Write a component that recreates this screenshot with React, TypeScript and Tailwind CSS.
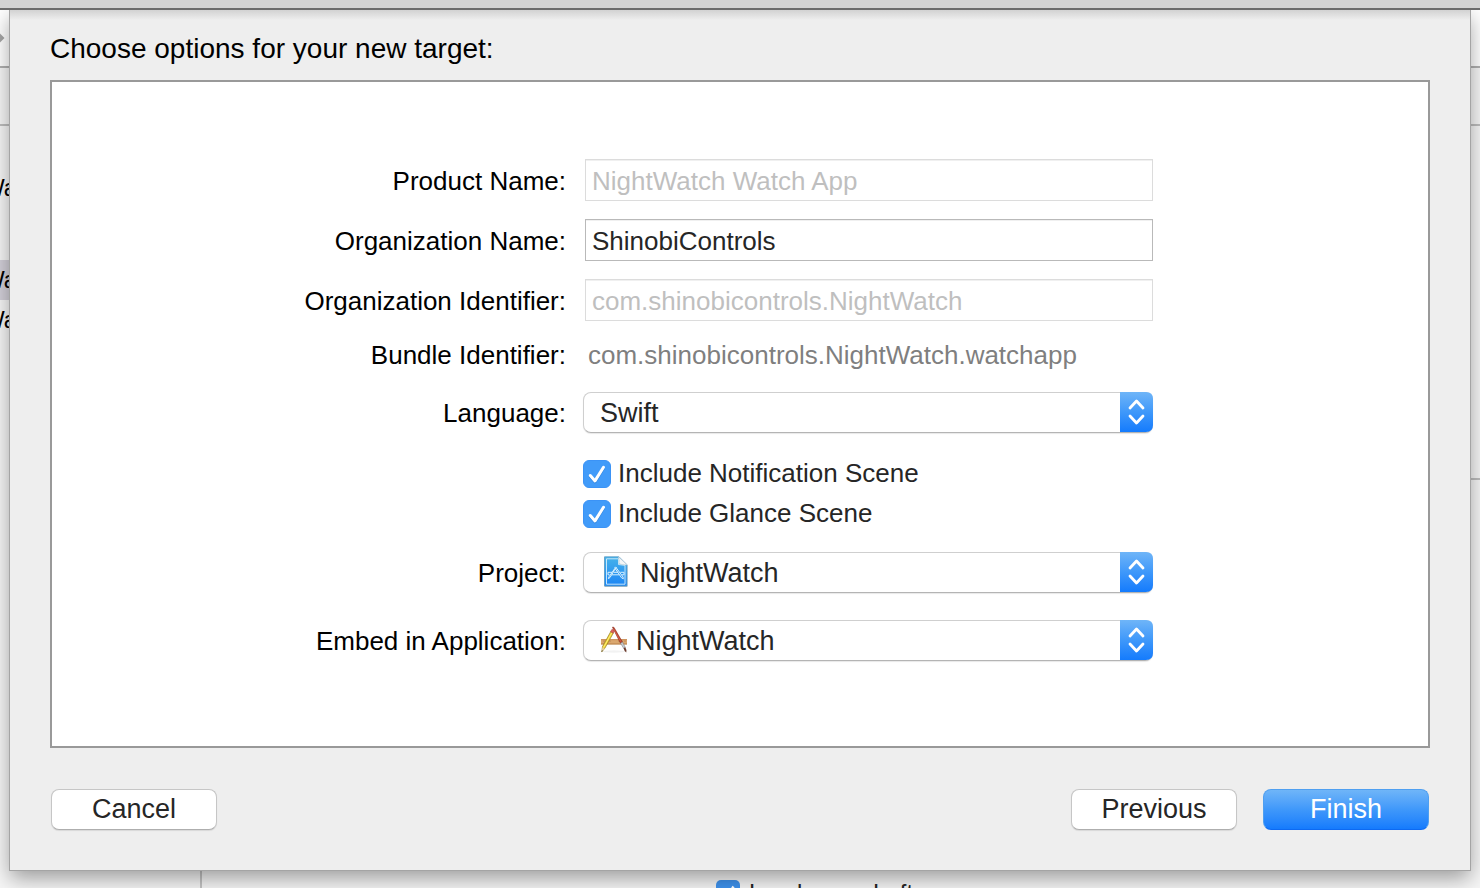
import type { ReactNode } from "react";

function Row({ label, htmlFor, children }: { label?: string; htmlFor?: string; children: ReactNode }) {
  return (
    <div className="grid grid-cols-[514fr_570fr_258fr] items-baseline gap-x-[17px]">
      {label ? (
        <label htmlFor={htmlFor} className="text-right text-[26px] leading-8 whitespace-nowrap text-black">
          {label}
        </label>
      ) : (
        <span />
      )}
      <div className="min-w-0">{children}</div>
    </div>
  );
}

function TextField({ id, value, disabled }: { id: string; value: string; disabled?: boolean }) {
  return (
    <div className="pl-0.5">
      <input
        id={id}
        type="text"
        defaultValue={value}
        disabled={disabled}
        className="block h-[42px] w-full border border-[#b9b9b9] bg-white px-1.5 pt-0.5 text-[26px] text-[#262626] shadow-[inset_0_1px_0_#f0f0f0] outline-none disabled:border-[#dcdcdc] disabled:text-[#bfbfbf]"
      />
    </div>
  );
}

function PopUp({ id, value, icon, pad }: { id: string; value: string; icon?: ReactNode; pad: string }) {
  return (
    <div className="relative">
      <select
        id={id}
        defaultValue={value}
        className={`block h-[41px] w-full appearance-none rounded-lg border border-[#cfcfcf] border-b-[#b4b4b4] bg-white text-[27px] text-[#262626] shadow-[0_1px_1px_#00000018] outline-none ${pad}`}
      >
        <option>{value}</option>
      </select>
      {icon}
      <svg
        className="pointer-events-none absolute top-0 right-0 h-[41px] w-[33px]"
        viewBox="0 0 33 41"
        aria-hidden="true"
      >
        <defs>
          <linearGradient id={`${id}-fill`} x1="0" y1="0" x2="0" y2="1">
            <stop offset="0" stopColor="#6fb5f8" />
            <stop offset="0.5" stopColor="#3f98fa" />
            <stop offset="1" stopColor="#147bfd" />
          </linearGradient>
        </defs>
        <path d="M0 0H26Q33 0 33 7V33Q33 40 26 40H0Z" fill={`url(#${id}-fill)`} />
        <path
          d="M10 16L16.500 9L23 16M10 24L16.500 31L23 24"
          fill="none"
          stroke="#fff"
          strokeWidth="2.800"
          strokeLinecap="round"
          strokeLinejoin="round"
        />
      </svg>
    </div>
  );
}

function CheckBox({ id, label }: { id: string; label: string }) {
  return (
    <div className="flex h-7 items-center">
      <span className="relative size-7 shrink-0">
        <input
          id={id}
          type="checkbox"
          defaultChecked
          className="peer block size-7 appearance-none rounded-md border border-[#b9b9b9] bg-white checked:border-[#3b93f6] checked:bg-[#419bf9]"
        />
        <svg
          viewBox="0 0 28 28"
          className="pointer-events-none absolute inset-0 hidden size-7 peer-checked:block"
          fill="none"
          strokeLinecap="round"
          strokeLinejoin="round"
          aria-hidden="true"
        >
          <path d="M7.300 16.500L12 21.900L20.500 8.300" stroke="#2a7fd8" strokeWidth="2.800" />
          <path d="M7.300 15.500L12 20.900L20.500 7.300" stroke="#fff" strokeWidth="3" />
        </svg>
      </span>
      <label htmlFor={id} className="pb-0.5 pl-[7px] text-[26px] leading-7 whitespace-nowrap text-[#262626]">
        {label}
      </label>
    </div>
  );
}

function ProjectIcon() {
  return (
    <svg
      viewBox="0 0 26 32"
      className="pointer-events-none absolute top-1 left-5 h-8 w-[26px]"
      fill="none"
      aria-hidden="true"
    >
      <defs>
        <linearGradient id="doc" x1="0" y1="0" x2="0" y2="1">
          <stop offset="0" stopColor="#46b2ea" />
          <stop offset="1" stopColor="#1c85f5" />
        </linearGradient>
      </defs>
      <path d="M1.500 1.500H16.500L24.500 9.500V31H1.500Z" fill="#7d8b96" opacity="0.5" />
      <path d="M1.500 0.800H16L24 8.800V30H1.500Z" fill="url(#doc)" stroke="#5d9cc4" strokeWidth="0.800" />
      <path d="M3.500 2.800H15.500V8.500L22 9.300V28.200H3.500Z" stroke="#d5effc" strokeWidth="0.900" />
      <path
        d="M15.500 0.800L24 8.800Q18.500 9.200 16 7.500Q16.500 4 15.500 0.800Z"
        fill="#f4f6f7"
        stroke="#c3cdd3"
        strokeWidth="0.600"
      />
      <path
        d="M13.300 11L7 21.500M11.500 11.500L18.500 21.800M12.500 10.800L20 21M11.800 12.500L6 20.800L5.400 22.600L7 21.500M5 16.300H9M10.800 16.300H15M17.300 16.300H21V18.800H18.500M16.300 18.800H8.800M6.500 18.800H5V16.300M18.500 21.800L20.300 22.800L20 21"
        stroke="#d8f1ff"
        strokeWidth="1"
      />
    </svg>
  );
}

function ApplicationIcon() {
  return (
    <svg
      viewBox="0 0 28 30"
      className="pointer-events-none absolute top-1.5 left-[17px] h-[30px] w-7"
      fill="none"
      aria-hidden="true"
    >
      <ellipse cx="14" cy="25.500" rx="12" ry="1.200" fill="#000" opacity="0.050" />
      <path d="M1 13.200H27V18.300H1Z" fill="#dba870" />
      <path d="M1 13.200H27V14.200H1Z" fill="#c98d55" />
      <path d="M1 17.500H27V18.500H1Z" fill="#b98048" />
      <path
        d="M4 14.300V16M7 14.300V15.500M10 14.300V16M19 14.300V16M22 14.300V15.500M25 14.300V16"
        stroke="#9a6a3a"
        strokeWidth="0.500"
      />
      <path d="M13.500 6.800L5 22L1.700 26L2.500 20.500L10.900 5.300Z" fill="#f0d02e" stroke="#857024" strokeWidth="0.600" />
      <path d="M11.900 6.500L3.600 21.500" stroke="#fff08a" strokeWidth="0.900" />
      <path d="M10.600 5.800L11.800 3.500Q13.300 3.200 14.200 4.800L13.200 7.200Z" fill="#e0605a" stroke="#a3423e" strokeWidth="0.500" />
      <path d="M2.400 21.200L4.700 22.400L1.700 26Z" fill="#e7cfa0" />
      <path d="M2 24.200L2.700 24.600L1.600 26.200Z" fill="#222" />
      <path d="M12.400 1.200Q13.500 0.300 14.400 2.100L22.500 16.100L20.500 17.300Z" fill="#c2412c" stroke="#7a2a1c" strokeWidth="0.500" />
      <path d="M13.500 3L20.800 15.500" stroke="#e4715d" strokeWidth="0.600" />
      <path d="M20.500 17.200L22.500 16L25.300 21.400L23.700 22.400Z" fill="#c9ccd0" stroke="#77797d" strokeWidth="0.500" />
      <path d="M23.600 22.300L25.300 21.300Q26.800 23.500 26.300 26.500Q24.100 25 23.600 22.300Z" fill="#6a3a2c" />
    </svg>
  );
}

function Backdrop() {
  return (
    <div className="absolute inset-0 flex flex-col overflow-hidden bg-[#f6f6f6] pt-2.5" aria-hidden="true">
      <div className="flex h-[58px] shrink-0 items-center border-b-2 border-[#b0b0b0] bg-white">
        <svg viewBox="0 0 6 10" className="h-2.5 w-1.5">
          <path d="M0 0.500L4.500 5L0 9.500Z" fill="#a5a5a5" />
        </svg>
      </div>
      <div className="h-[58px] shrink-0 border-b-2 border-[#bdbdbd]" />
      <div className="flex flex-1">
        <div className="w-[202px] border-r-2 border-[#c4c4c4] pt-[42px] text-[23px] leading-10 text-black">
          <div className="-ml-[17px] h-10">Wa</div>
          <div className="mt-[52px] h-10 bg-[#d3d0d9]">
            <div className="-ml-[17px]">Wa</div>
          </div>
          <div className="-ml-[17px] h-10">Wa</div>
        </div>
        <div className="flex-1">
          <div className="h-[354px] border-b-2 border-[#bdbdbd]" />
          <div className="flex gap-[9px] pt-[400px] pl-[514px]">
            <svg viewBox="0 0 24 24" className="size-6">
              <rect width="24" height="24" rx="5" fill="#3f93ee" />
              <path d="M6.500 13L10.500 18L17.500 6.500" stroke="#fff" strokeWidth="2.500" fill="none" />
            </svg>
            <span className="text-[24px] leading-[26px] text-[#262626]">Landscape Left</span>
          </div>
        </div>
      </div>
    </div>
  );
}

const pushButton =
  "h-[41px] w-[166px] rounded-lg border border-[#c6c6c6] border-b-[#aeaeae] bg-white pb-0.5 text-[27px] leading-8 text-[#262626] shadow-[0_1px_1px_#00000018]";

export default function App() {
  return (
    <div className="relative h-screen overflow-hidden font-['Liberation_Sans',Arial,sans-serif]">
      <Backdrop />
      <div className="relative z-10 h-2.5 border-b-2 border-[#6b6b6b] bg-[#d3d3d3]" />
      <main className="relative mx-2.5 bg-[#eeeeee] px-10 pt-[22px] pb-10 shadow-[0_0_0_1px_#a4a4a4,0_8px_20px_#00000060]">
        <div className="absolute inset-x-0 top-0 h-2.5 bg-gradient-to-b from-[#d2d2d2] to-[#eeeeee]" />
        <h1 className="relative mb-[14px] text-[28px] leading-[34px] text-black">
          Choose options for your new target:
        </h1>
        <form onSubmit={(event) => event.preventDefault()}>
          <div className="flex flex-col border-2 border-[#999999] bg-white pt-[77px] pb-[85px]">
            <div className="flex flex-col gap-[18px]">
              <Row label="Product Name:" htmlFor="product">
                <TextField id="product" value="NightWatch Watch App" disabled />
              </Row>
              <Row label="Organization Name:" htmlFor="organization">
                <TextField id="organization" value="ShinobiControls" />
              </Row>
              <Row label="Organization Identifier:" htmlFor="identifier">
                <TextField id="identifier" value="com.shinobicontrols.NightWatch" disabled />
              </Row>
              <Row label="Bundle Identifier:" htmlFor="bundle">
                <output id="bundle" className="block pb-0.5 pl-[5px] text-[26px] leading-[33px] text-[#7f7f7f]">
                  com.shinobicontrols.NightWatch.watchapp
                </output>
              </Row>
              <Row label="Language:" htmlFor="language">
                <PopUp id="language" value="Swift" pad="pl-4" />
              </Row>
            </div>
            <div className="pt-[27px] pb-6">
              <Row>
                <div className="flex flex-col gap-3">
                  <CheckBox id="notification" label="Include Notification Scene" />
                  <CheckBox id="glance" label="Include Glance Scene" />
                </div>
              </Row>
            </div>
            <div className="flex flex-col gap-[27px]">
              <Row label="Project:" htmlFor="project">
                <PopUp id="project" value="NightWatch" icon={<ProjectIcon />} pad="pl-14" />
              </Row>
              <Row label="Embed in Application:" htmlFor="embed">
                <PopUp id="embed" value="NightWatch" icon={<ApplicationIcon />} pad="pl-[52px]" />
              </Row>
            </div>
          </div>
          <div className="flex items-center gap-[26px] px-px pt-[41px]">
            <button type="button" className={`${pushButton} mr-auto`}>
              Cancel
            </button>
            <button type="button" className={pushButton}>
              Previous
            </button>
            <button
              type="submit"
              className="h-[41px] w-[166px] rounded-lg border border-[#4f9ff0] border-b-[#0d6af2] bg-gradient-to-b from-[#6fb5f8] via-[#3f98fa] to-[#147bfd] pb-0.5 text-[27px] leading-8 text-white"
            >
              Finish
            </button>
          </div>
        </form>
      </main>
    </div>
  );
}
